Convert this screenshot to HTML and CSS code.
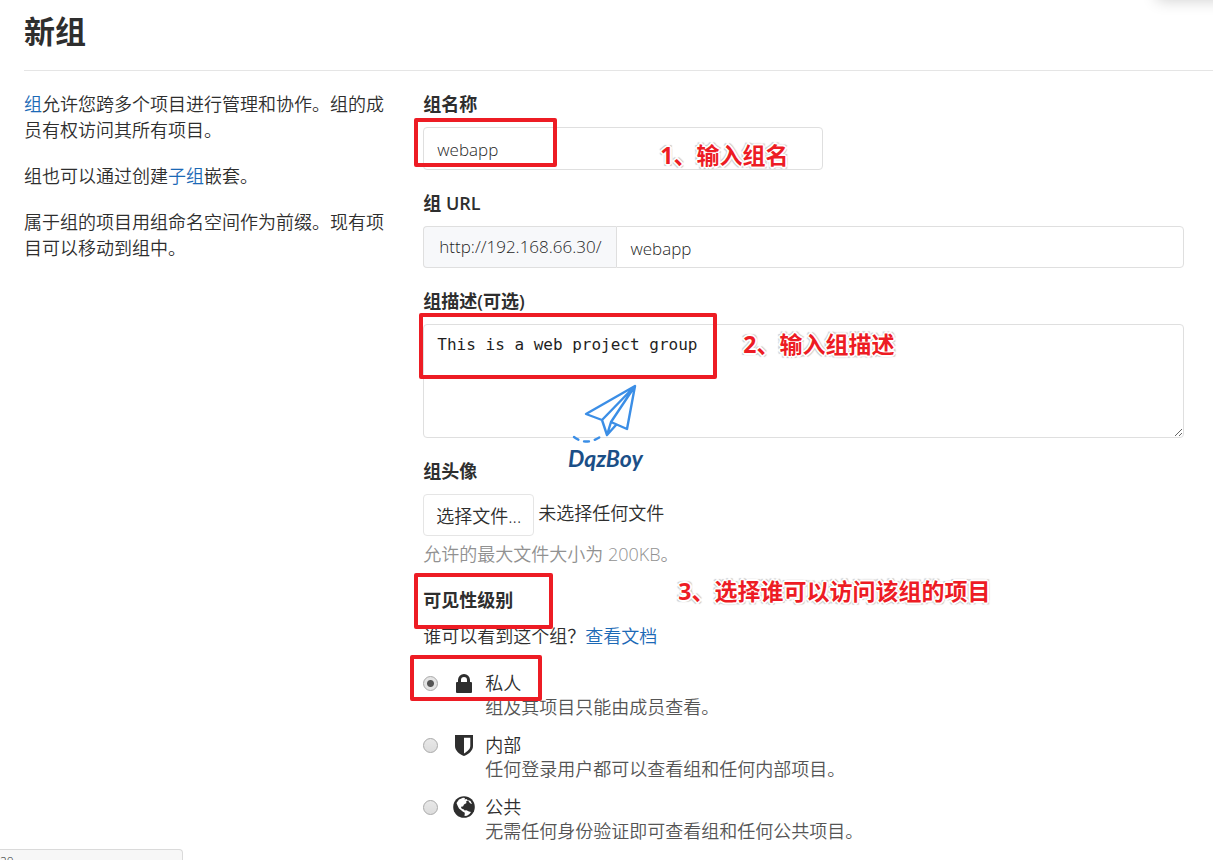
FILE: index.html
```
<!DOCTYPE html>
<html lang="zh-CN">
<head>
  <meta charset="UTF-8">
  <meta name="viewport" content="width=device-width, initial-scale=1.0">
  <title>新组</title>
  <link rel="stylesheet" href="styles.css">
</head>
<body>
  <div class="menu-shadow"></div>

  <main class="page">
    <h1 class="page-title">新组</h1>

    <div class="content">
      <aside class="intro">
        <p><a href="#">组</a>允许您跨多个项目进行管理和协作。组的成员有权访问其所有项目。</p>
        <p>组也可以通过创建<a href="#">子组</a>嵌套。</p>
        <p>属于组的项目用组命名空间作为前缀。现有项目可以移动到组中。</p>
      </aside>

      <form class="group-form">
        <div class="form-group">
          <label class="form-label" for="group-name">组名称</label>
          <input class="form-control name-input" id="group-name" type="text" value="webapp">
        </div>

        <div class="form-group">
          <label class="form-label" for="group-path">组 URL</label>
          <div class="input-group">
            <span class="input-addon">http://192.168.66.30/</span>
            <input class="form-control" id="group-path" type="text" value="webapp">
          </div>
        </div>

        <div class="form-group">
          <label class="form-label" for="group-desc">组描述(可选)</label>
          <textarea class="form-control desc-input" id="group-desc" spellcheck="false">This is a web project group</textarea>
        </div>

        <div class="form-group">
          <div class="form-label">组头像</div>
          <div class="file-row">
            <button class="btn" type="button">选择文件...</button>
            <span class="file-name">未选择任何文件</span>
          </div>
          <div class="help">允许的最大文件大小为 200KB。</div>
        </div>

        <div class="form-group">
          <div class="form-label">可见性级别</div>
          <p class="visibility-hint">谁可以看到这个组？<a href="#">查看文档</a></p>

          <div class="option">
            <input class="radio" type="radio" name="visibility" id="v-private" checked>
            <svg class="option-icon" viewBox="0 0 22 22">
              <path fill="#2e2e2e" fill-rule="evenodd" d="M5 10V8a6 6 0 0 1 12 0v2h1a1 1 0 0 1 1 1v9a1 1 0 0 1-1 1H4a1 1 0 0 1-1-1v-9a1 1 0 0 1 1-1zm3 0h6V8a3 3 0 0 0-6 0z"/>
            </svg>
            <label class="option-title" for="v-private">私人</label>
            <span class="option-desc">组及其项目只能由成员查看。</span>
          </div>

          <div class="option">
            <input class="radio" type="radio" name="visibility" id="v-internal">
            <svg class="option-icon" viewBox="0 0 22 22">
              <path fill="#2e2e2e" fill-rule="evenodd" d="M2 1h18v11c0 4.500-4 8-9 10C6 20 2 16.500 2 12zm9 2.700v15.700c3.500-2 6.300-4.400 6.300-7.400V3.700z"/>
            </svg>
            <label class="option-title" for="v-internal">内部</label>
            <span class="option-desc">任何登录用户都可以查看组和任何内部项目。</span>
          </div>

          <div class="option">
            <input class="radio" type="radio" name="visibility" id="v-public">
            <svg class="option-icon" viewBox="0 0 22 22">
              <circle cx="11" cy="11" r="10.800" fill="#2e2e2e"/>
              <path fill="#fff" d="M3.500 7l2.500-3.500 4-1.700 2 .2-.5 1.500 2-.5 1.500 1.500-2 1 .5 1.500-2.500 1.500-1 2-1.500 0-.5 1.500 1.500 1 1.500.5.500 1.500-1 1.200-2-1.700-2.500-2-1.500-3z"/>
              <path fill="#fff" d="M10.500 14.500l3-.3 2.500 1.300 2 .5-1.500 2-2.500 1.800-2.500.2.300-2.500z"/>
              <path fill="#fff" d="M15 4l2.500 1 1.500 3-1.500-.5-1.500-1.500z"/>
            </svg>
            <label class="option-title" for="v-public">公共</label>
            <span class="option-desc">无需任何身份验证即可查看组和任何公共项目。</span>
          </div>
        </div>

        <!-- Tutorial marks laid over the form -->
        <div class="marks">
          <div class="mark mark-name"></div>
          <div class="mark mark-desc"></div>
          <div class="mark mark-visibility"></div>
          <div class="mark mark-private"></div>
          <div class="step step-1">1、输入组名</div>
          <div class="step step-2">2、输入组描述</div>
          <div class="step step-3">3、选择谁可以访问该组的项目</div>
          <svg class="watermark" viewBox="0 0 90 100" width="90" height="100">
            <g fill="none" stroke="#3b8ee6" stroke-width="2.400" stroke-linejoin="round" stroke-linecap="round">
              <path d="M74 6L25 34l16 6zM74 6L41 40l5 15 4-13zM74 6L50 42l16 7zM46 55l9-10"/>
              <path d="M13 57q12 9 26 0" stroke-dasharray="5 6"/>
            </g>
            <text class="watermark-text" x="7" y="87">DqzBoy</text>
          </svg>
        </div>
      </form>
    </div>
  </main>

  <div class="status">20</div>
</body>
</html>
```
FILE: styles.css
```
* {
  box-sizing: border-box;
}

body {
  margin: 0;
  height: 100vh;
  overflow: hidden;
  background: #fff;
  color: #2e2e2e;
  font-family: "Open Sans", "Noto Sans CJK SC", sans-serif;
  font-size: 18px;
  font-weight: 350;
  line-height: 26px;
}

a {
  color: #1b69b6;
  text-decoration: none;
}

input,
button,
textarea {
  font: inherit;
  color: inherit;
}

.page {
  padding-left: 24px;
}

.page-title {
  margin: 0 0 20px;
  padding: 11px 0 19px;
  border-bottom: 1px solid #e5e5e5;
  font-size: 31px;
  line-height: 40px;
  font-weight: 700;
}

.content {
  display: grid;
  grid-template-columns: 1fr 2fr;
  gap: 19px;
  padding-right: 29px;
}

.intro {
  padding-right: 8px;
}

.intro p {
  margin: 0 0 20px;
}

.group-form {
  position: relative;
}

.form-group {
  margin-bottom: 20px;
}

.form-label {
  display: block;
  margin-bottom: 10px;
  font-weight: 600;
}

.form-control {
  display: block;
  width: 100%;
  height: 42px;
  padding: 2px 13px 0;
  border: 1px solid #dfdfdf;
  border-radius: 4px;
  background: #fff;
  color: #1f1f1f;
  font-size: 17px;
}

.name-input {
  width: 400px;
  max-width: 100%;
  height: 43px;
}

.input-group {
  display: flex;
}

.input-addon {
  padding: 7px 15px;
  border: 1px solid #dfdfdf;
  border-right: 0;
  border-radius: 4px 0 0 4px;
  background: #f7f8fa;
  color: #1f1f1f;
  font-size: 17px;
}

.input-group .form-control {
  flex: 1;
  min-width: 0;
  border-radius: 0 4px 4px 0;
}

.desc-input {
  height: 114px;
  padding: 7px 13px;
  font-family: "DejaVu Sans Mono", monospace;
  font-size: 16px;
  resize: vertical;
}

.file-row {
  display: flex;
  gap: 4px;
}

.btn {
  height: 42px;
  padding: 2px 12px 0;
  border: 1px solid #e5e5e5;
  border-radius: 4px;
  background: #fff;
}

.file-name {
  padding-top: 6px;
}

.help {
  margin-top: 5px;
  color: #919191;
}

.visibility-hint {
  margin: 0 0 22px;
}

.option {
  display: grid;
  grid-template-columns: 15px 22px 1fr;
  column-gap: 15px;
  align-items: center;
  margin-bottom: 14px;
  line-height: 24px;
}

.radio {
  appearance: none;
  width: 15px;
  height: 15px;
  margin: 0;
  border: 1px solid #a9a9a9;
  border-radius: 50%;
  background: linear-gradient(#e8e8e8, #dcdcdc);
}

.radio:checked {
  background: radial-gradient(circle, #555 0 3px, #e4e4e4 4px);
}

.option-icon {
  width: 22px;
  height: 22px;
}

.option-title,
.option-desc {
  margin-left: -5px;
}

.option-desc {
  grid-column: 3;
  color: #555;
}

.marks {
  position: absolute;
  inset: 0;
  pointer-events: none;
}

.mark {
  position: absolute;
  border: 4px solid #ed1c24;
  border-radius: 2px;
}

.mark-name {
  left: -9px;
  top: 27px;
  width: 143px;
  height: 49px;
}

.mark-desc {
  left: -4px;
  top: 222px;
  width: 298px;
  height: 66px;
}

.mark-visibility {
  left: -9px;
  top: 482px;
  width: 139px;
  height: 56px;
}

.mark-private {
  left: -13px;
  top: 564px;
  width: 132px;
  height: 46px;
}

.step {
  position: absolute;
  color: #ed1c24;
  font-size: 23px;
  line-height: 32px;
  font-weight: 700;
  white-space: nowrap;
  text-shadow:
    -1px -1px #fff, 1px -1px #fff, -1px 1px #fff, 1px 1px #fff,
    -2px 0 #fff, 2px 0 #fff, 0 -2px #fff, 0 2px #fff,
    -2px -2px 1px #ccc, 2px -2px 1px #ccc, -2px 2px 1px #ccc, 2px 2px 1px #ccc;
}

.step-1 {
  left: 237px;
  top: 48px;
}

.step-2 {
  left: 320px;
  top: 237px;
}

.step-3 {
  left: 255px;
  top: 484px;
}

.watermark {
  position: absolute;
  left: 138px;
  top: 289px;
}

.watermark-text {
  fill: #1b4f87;
  font-family: Lato, cursive;
  font-size: 23px;
  font-style: italic;
  font-weight: 700;
}

.menu-shadow {
  position: fixed;
  top: -22px;
  right: -20px;
  width: 76px;
  height: 20px;
  box-shadow: 0 2px 16px rgba(0, 0, 0, 0.2);
}

.status {
  position: fixed;
  left: 0;
  bottom: 0;
  width: 183px;
  height: 11px;
  padding-top: 6px;
  border: 1px solid #dadada;
  border-width: 1px 1px 0 0;
  border-radius: 0 4px 0 0;
  background: #f7f7f7;
  font-size: 12px;
  line-height: 12px;
  overflow: hidden;
}
```
